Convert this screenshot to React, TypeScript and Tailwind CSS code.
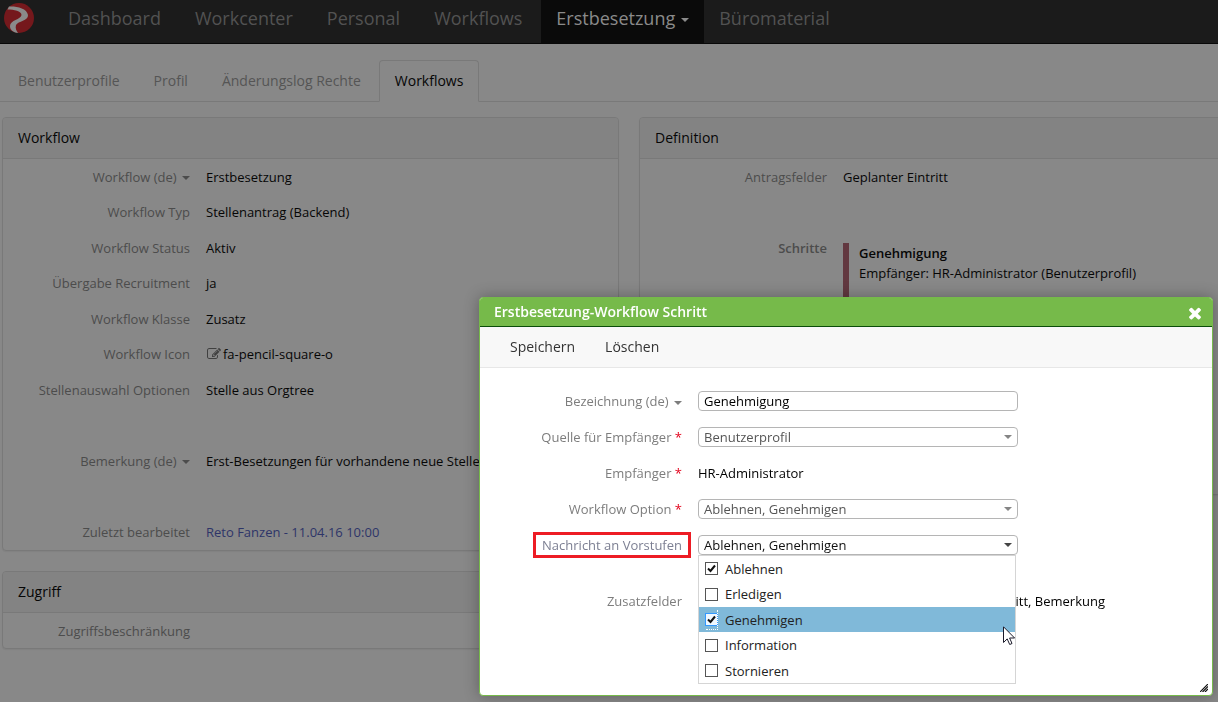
import { useState } from "react";
import type { ReactNode } from "react";

const navItems = ["Dashboard", "Workcenter", "Personal", "Workflows", "Erstbesetzung", "Büromaterial"];
const tabs = ["Benutzerprofile", "Profil", "Änderungslog Rechte", "Workflows"];
const options = ["Ablehnen", "Erledigen", "Genehmigen", "Information", "Stornieren"];

const Caret = ({ className }: { className: string }) => (
  <svg viewBox="0 0 8 4" className={`${className} inline-block w-2 h-1 align-middle fill-current`}>
    <path d="M0 0h8L4 4z" />
  </svg>
);

const Logo = () => (
  <svg viewBox="0 0 30 30" className="block w-[30px] h-[30px]">
    <circle cx="15" cy="15" r="15" fill="#75181c" />
    <path
      d="M5 3.5C12 3 23 5 24 12C24.5 18 14 18 12 22C11 25 12.500 28 14 30C9 29.5 6 27 6 23C6 17 17 16.5 17.5 12C17.5 8 10 6.5 3.5 6.5z"
      fill="#8a8a8a"
    />
  </svg>
);

const PencilIcon = () => (
  <svg viewBox="0 0 1792 1792" className="w-[14px] h-[14px] ml-px mr-[2px] fill-[#404040]">
    <path d="M888 1184l116-116-152-152-116 116v56h96v96h56zm440-720q-16-16-33 1l-350 350q-17 17-1 33t33-1l350-350q17-17 1-33zm80 594v190q0 119-84.5 203.5t-203.5 84.5h-832q-119 0-203.5-84.5t-84.5-203.5v-832q0-119 84.5-203.5t203.5-84.5h832q63 0 117 25 15 7 18 23 3 17-9 29l-49 49q-14 14-32 8-23-6-45-6h-832q-66 0-113 47t-47 113v832q0 66 47 113t113 47h832q66 0 113-47t47-113v-126q0-13 9-22l64-64q15-15 35-7t20 29zm-96-738l288 288-672 672h-288v-288zm444 132l-92 92-288-288 92-92q28-28 68-28t68 28l152 152q28 28 28 68t-28 68z" />
  </svg>
);

const Panel = ({ title, children }: { title: string; children: ReactNode }) => (
  <section className="rounded border border-[#797979] shadow-[0_1px_1px_rgba(0,0,0,0.05)]">
    <h2 className="h-[41px] px-[15px] text-sm leading-10 bg-[#838383] border-b border-[#797979] rounded-t">{title}</h2>
    {children}
  </section>
);

const Row = ({ label, caret, children }: { label?: string; caret?: boolean; children?: ReactNode }) => (
  <div className="flex items-center gap-4 odd:h-[35px] even:h-9">
    <dt className="w-[187px] shrink-0 text-right text-[#4c4c4c]">
      {label}
      {caret && <> <Caret className="ml-[2px]" /></>}
    </dt>
    <dd className="flex items-center whitespace-nowrap">{children}</dd>
  </div>
);

const FormRow = ({ label, htmlFor, caret, required, marked, children }: {
  label: string;
  htmlFor?: string;
  caret?: boolean;
  required?: boolean;
  marked?: boolean;
  children: ReactNode;
}) => (
  <div className="flex items-center gap-4 h-9">
    <div className="flex justify-end w-[202px] shrink-0 whitespace-nowrap text-[#7d7d7d]">
      <label
        htmlFor={htmlFor}
        className={marked ? "h-[26px] px-[6px] -mr-[9px] border-3 border-[#ed1c24] leading-5 text-[#7c7f92]" : ""}
      >
        {label}
        {caret && <> <Caret className="ml-[2px]" /></>}
        {required && <span className="text-[#e2001a]"> *</span>}
      </label>
    </div>
    {children}
  </div>
);

const SelectBox = ({ id, value, active, children }: { id: string; value: string; active?: boolean; children?: ReactNode }) => (
  <div className={active ? "relative w-80 text-[#444]" : "relative w-80 text-[#858585]"}>
    <select
      id={id}
      value={value}
      onChange={() => {}}
      className={`${active ? "text-[#111]" : "text-[#555]"} block w-full h-5 px-[5px] appearance-none bg-white border border-[#b5b5b5] rounded leading-[18px]`}
    >
      <option>{value}</option>
    </select>
    <svg viewBox="0 0 8 4" className="absolute right-[6px] top-2 w-2 h-1 fill-current pointer-events-none">
      <path d="M0 0h8L4 4z" />
    </svg>
    {children}
  </div>
);

const OptionItem = ({ name, checked, onToggle, hovered }: { name: string; checked: boolean; onToggle: () => void; hovered: boolean }) => (
  <li className={`${hovered ? "bg-[#80b9d9]" : "bg-white"} relative odd:h-[25px] even:h-[26px]`}>
    <label className="flex items-center h-full gap-[7px] pl-[6px] text-[#222]">
      <span className="relative w-[13px] h-[13px]">
        <input
          type="checkbox"
          checked={checked}
          onChange={onToggle}
          className={`${hovered ? "border-[#3399ff] bg-[#f0f8ff]" : "border-[#555] bg-white"} peer block w-[13px] h-[13px] appearance-none border outline-none`}
        />
        <svg viewBox="0 0 13 13" className="absolute inset-0 hidden peer-checked:block pointer-events-none">
          <path d="M3 6.5L5.5 9L10 3.5" fill="none" stroke="#111" strokeWidth="2" />
        </svg>
        {hovered && <span className="absolute left-px right-0 -top-[3px] -bottom-1 border-r border-b border-dotted border-white pointer-events-none" />}
      </span>
      {name}
    </label>
    {hovered && (
      <svg viewBox="0 0 12 19" className="absolute z-10 right-0 top-[19px] w-3 h-[19px]">
        <path d="M.5.8v15.7l3.700-3.600 2.500 5.600 2.300-1-2.400-5.500h5z" fill="#fff" stroke="#1a1a2a" strokeWidth="1" />
      </svg>
    )}
  </li>
);

const StepDialog = () => {
  const [name, setName] = useState("Genehmigung");
  const [selected, setSelected] = useState(["Ablehnen", "Genehmigen"]);

  const toggle = (option: string) => {
    setSelected(options.filter((o) => (o === option ? !selected.includes(o) : selected.includes(o))));
  };

  return (
    <div role="dialog" aria-label="Erstbesetzung-Workflow Schritt" className="relative w-full max-w-[734px] bg-white border border-[#76ba4a] rounded shadow-[0_0_15px_rgba(0,0,0,0.3)]">
      <header className="flex items-center justify-between h-[29px] pl-[14px] pr-2 bg-[#76ba4a] border-b border-[#0a4d0a] rounded-t-[3px] text-white">
        <h2 className="text-sm font-semibold">Erstbesetzung-Workflow Schritt</h2>
        <button aria-label="Schliessen" className="pt-px">
          <svg viewBox="0 0 1792 1792" className="w-[18px] h-[18px] fill-current">
            <path d="M1490 1322q0 40-28 68l-136 136q-28 28-68 28t-68-28l-294-294-294 294q-28 28-68 28t-68-28l-136-136q-28-28-28-68t28-68l294-294-294-294q-28-28-28-68t28-68l136-136q28-28 68-28t68 28l294 294 294-294q28-28 68-28t68 28l136 136q28 28 28 68t-28 68l-294 294 294 294q28 28 28 68z" />
          </svg>
        </button>
      </header>
      <div className="flex items-center h-[41px] px-[15px] bg-[#f8f8f8] border-b border-[#e7e7e7] text-sm text-[#333]">
        <button className="px-[15px]">Speichern</button>
        <button className="px-[15px]">Löschen</button>
      </div>
      <form className="pt-[15px] pb-[76px]">
        <FormRow label="Bezeichnung (de)" htmlFor="bezeichnung" caret>
          <input
            id="bezeichnung"
            value={name}
            onChange={(e) => setName(e.target.value)}
            className="w-80 h-5 px-[5px] border border-[#b5b5b5] rounded leading-[18px] text-black"
          />
        </FormRow>
        <FormRow label="Quelle für Empfänger" htmlFor="quelle" required>
          <SelectBox id="quelle" value="Benutzerprofil" />
        </FormRow>
        <FormRow label="Empfänger" required>
          <span className="text-black">HR-Administrator</span>
        </FormRow>
        <FormRow label="Workflow Option" htmlFor="option" required>
          <SelectBox id="option" value="Ablehnen, Genehmigen" />
        </FormRow>
        <FormRow label="Nachricht an Vorstufen" htmlFor="nachricht" marked>
          <SelectBox id="nachricht" value={selected.join(", ")} active>
            <ul className="absolute z-10 left-0 top-full w-[318px] border border-[#d5d5d5] bg-white">
              {options.map((option) => (
                <OptionItem
                  key={option}
                  name={option}
                  checked={selected.includes(option)}
                  onToggle={() => toggle(option)}
                  hovered={option === "Genehmigen"}
                />
              ))}
            </ul>
          </SelectBox>
        </FormRow>
        <div className="mt-5">
          <FormRow label="Zusatzfelder">
            <span className="w-[407px] text-right text-black">Geplanter Eintritt, Bemerkung</span>
          </FormRow>
        </div>
      </form>
      <svg viewBox="0 0 8 8" className="absolute right-1 bottom-[3px] w-2 h-2">
        <path d="M0 8L8 0M2.500 8L8 2.500M5 8L8 5" fill="none" stroke="#111" strokeWidth="1.200" />
      </svg>
    </div>
  );
};

export default function App() {
  return (
    <div className="min-h-screen overflow-hidden bg-[#888] font-['Open_Sans',sans-serif] text-[13px] leading-5 text-[#060606]">
      <nav className="flex items-start h-11 pl-1 bg-[#1b1b1b] border-b border-[#080808] text-lg text-[#525252]">
        <a href="#" aria-label="Start" className="pt-[3px] mr-[19px]">
          <Logo />
        </a>
        {navItems.map((item) =>
          item === "Erstbesetzung" ? (
            <a key={item} href="#" className="h-[43px] px-[15px] leading-9 bg-[#0a0a0a] text-[#8a8a8a]">
              {item}
              <Caret className="ml-[6px]" />
            </a>
          ) : (
            <a key={item} href="#" className="h-[43px] px-[15px] mr-1 leading-9">
              {item}
            </a>
          )
        )}
      </nav>
      <div className="flex items-end gap-[2px] h-[58px] pl-[2px] border-b border-[#797979] text-sm text-[#555]">
        {tabs.map((tab) => (
          <a
            key={tab}
            href="#"
            className={`${tab === "Workflows" ? "border-[#797979] border-b-[#888] bg-[#888] text-[#060606]" : "border-transparent"} h-[42px] -mb-px px-[15px] border rounded-t leading-10`}
          >
            {tab}
          </a>
        ))}
      </div>
      <main className="grid grid-cols-[617fr_579fr] items-start gap-5 pl-[2px] pt-[15px]">
        <div className="flex flex-col gap-5">
          <Panel title="Workflow">
            <dl className="pb-px">
              <Row label="Workflow (de)" caret>Erstbesetzung</Row>
              <Row label="Workflow Typ">Stellenantrag (Backend)</Row>
              <Row label="Workflow Status">Aktiv</Row>
              <Row label="Übergabe Recruitment">ja</Row>
              <Row label="Workflow Klasse">Zusatz</Row>
              <Row label="Workflow Icon"><PencilIcon />fa-pencil-square-o</Row>
              <Row label="Stellenauswahl Optionen">Stelle aus Orgtree</Row>
              <Row />
              <Row label="Bemerkung (de)" caret>Erst-Besetzungen für vorhandene neue Stellen</Row>
              <Row />
              <Row label="Zuletzt bearbeitet">
                <a href="#" className="text-[#2e3568]">Reto Fanzen - 11.04.16 10:00</a>
              </Row>
            </dl>
          </Panel>
          <Panel title="Zugriff">
            <dl>
              <Row label="Zugriffsbeschränkung" />
            </dl>
          </Panel>
        </div>
        <div className="-mr-10">
          <Panel title="Definition">
            <dl>
              <Row label="Antragsfelder">Geplanter Eintritt</Row>
              <Row />
              <div className="flex items-start gap-4 min-h-[264px]">
                <dt className="w-[187px] shrink-0 text-right leading-9 font-semibold text-[#4c4c4c]">Schritte</dt>
                <dd className="h-[71px] mt-[13px] pl-[10px] border-l-6 border-[#623840] whitespace-nowrap">
                  <p className="font-semibold">Genehmigung</p>
                  <p>Empfänger: HR-Administrator (Benutzerprofil)</p>
                </dd>
              </div>
            </dl>
          </Panel>
        </div>
      </main>
      <div className="fixed inset-0 flex items-end justify-end pr-[5px] pb-[6px]">
        <StepDialog />
      </div>
    </div>
  );
}
